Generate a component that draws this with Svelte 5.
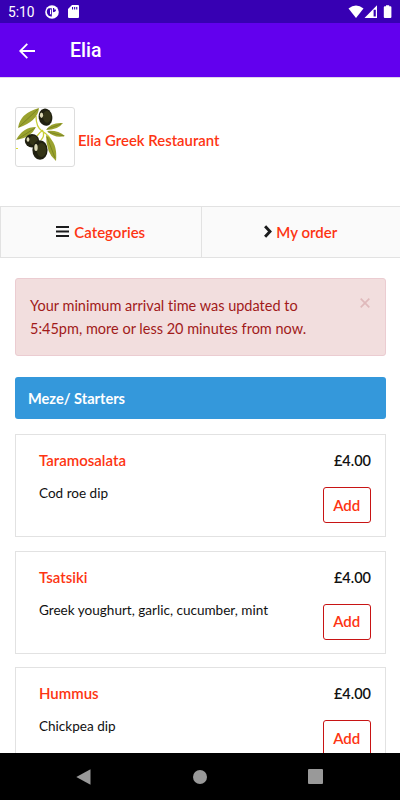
<script>
  const restaurant = 'Elia Greek Restaurant'
  const section = 'Meze/ Starters'

  const items = [
    { id: 1, name: 'Taramosalata', description: 'Cod roe dip', price: 4 },
    { id: 2, name: 'Tsatsiki', description: 'Greek youghurt, garlic, cucumber, mint', price: 4 },
    { id: 3, name: 'Hummus', description: 'Chickpea dip', price: 4 }
  ]

  let showAlert = $state(true)

  function formatPrice(value) {
    return '£' + value.toFixed(2)
  }
</script>

<div class="screen">
  <div class="status-bar">
    <span class="time">5:10</span>
    <svg class="app-icon" width="14" height="14" viewBox="0 0 14 14">
      <circle cx="7" cy="7" r="6.8" fill="#fff" />
      <path d="M3.6 3.2H6.8V11.4A4.6 4.6 0 0 1 3.6 3.2Z" fill="#3700b3" />
      <path d="M5 4.5h1v4.8H5z" fill="#fff" />
      <path d="M8 3h1.2v1.6h1.7v1.2q-.5 1.4-2.9 1.5z" fill="#3700b3" />
    </svg>
    <svg class="sd-icon" width="11" height="13" viewBox="0 0 11 13">
      <path d="M4 0h6a1 1 0 0 1 1 1v11a1 1 0 0 1-1 1H1a1 1 0 0 1-1-1V4z" fill="#fff" />
      <path d="M4 2h1.1v2.4H4zM6.1 2h1.1v2.4H6.1zM8.2 2h1.1v2.4H8.2z" fill="#3700b3" />
    </svg>
    <span class="spacer"></span>
    <svg width="45" height="14" viewBox="0 0 45 14" fill="#fff">
      <path d="M0.5 3.5Q8 -2.5 15.5 3.5L8 13z" />
      <path d="M29 0.3V13H16.5zM27.8 4.8H25.6V11.5h2.2z" fill-rule="evenodd" />
      <path d="M38 1.3V0.3h3.2v1h1.2q1 0 1 1v9.7q0 1-1 1h-5.6q-1 0-1-1V2.3q0-1 1-1z" />
    </svg>
  </div>

  <header class="app-bar">
    <button class="back" aria-label="Back">
      <svg width="16" height="16" viewBox="0 0 16 16" fill="none" stroke="#fff" stroke-width="1.8">
        <path d="M16 8H1.5M8.3 0.9L1.2 8l7.1 7.1" />
      </svg>
    </button>
    <h1>Elia</h1>
  </header>

  <main>
    <div class="restaurant">
      <svg class="logo" viewBox="1 1 58 58">
        <g fill="none" stroke="#c9cf35" stroke-width="1.3">
          <path d="M21 9Q21 20 27 24Q35 29 36 34M28 23Q25 25 22 29M28 24Q30 29 26 33" />
        </g>
        <path d="M3 21Q5 6 24 1Q23 14 3 21Z" fill="#9aa22e" />
        <path d="M1 33Q8 20 21 20Q16 31 1 33Z" fill="#9aa22e" />
        <path d="M31 23Q36 15 48 16Q43 23 31 23Z" fill="#9aa22e" />
        <path d="M32 24Q43 23 50 29Q40 32 32 24Z" fill="#9aa22e" />
        <path d="M31 28Q43 35 41 54Q31 46 31 28Z" fill="#9aa22e" />
        <g fill="none" stroke="#6f7820" stroke-width="0.7">
          <path d="M4 20L23 2M3 32L20 21M32 22L46 17M33 25L49 29M32 30L40 51" />
        </g>
        <ellipse cx="30.5" cy="10.2" rx="6.8" ry="8.7" transform="rotate(-10 30.5 10.2)" fill="#202010" />
        <ellipse cx="32" cy="9.7" rx="4" ry="6" fill="#343416" />
        <ellipse cx="26.5" cy="8.2" rx="1.6" ry="2.8" fill="#ddd9b5" />
        <ellipse cx="17" cy="33.8" rx="7.2" ry="6.8" fill="#202010" />
        <ellipse cx="18.5" cy="33.5" rx="4.2" ry="4.7" fill="#343416" />
        <ellipse cx="13" cy="32.5" rx="1.4" ry="2.2" fill="#ddd9b5" />
        <ellipse cx="25" cy="43" rx="7.6" ry="9.8" fill="#202010" />
        <ellipse cx="26.5" cy="43" rx="4.7" ry="7" fill="#343416" />
        <ellipse cx="21" cy="40.5" rx="1.7" ry="3.6" fill="#ddd9b5" />
        <path d="M1 41h2v1H1z" fill="#d8dc25" />
        <path d="M0 25h1v2H0z" fill="#777" />
      </svg>
      <a class="restaurant-name" href="#home">{restaurant}</a>
    </div>

    <nav class="tabs">
      <a class="tab" href="#categories">
        <svg class="bars" width="13" height="11" viewBox="0 0 13 11" fill="#1b1c1d">
          <path d="M0 0h13v2H0zM0 4.5h13v2H0zM0 9h13v2H0z" />
        </svg>
        Categories
      </a>
      <a class="tab" href="#order">
        <svg class="chevron" width="8" height="13" viewBox="0 0 8 13" fill="none" stroke="#1b1c1d" stroke-width="2.9">
          <path d="M1.1 1.2L6 6.5L1.1 11.8" />
        </svg>
        My order
      </a>
    </nav>

    {#if showAlert}
      <div class="alert">
        <p>Your minimum arrival time was updated to 5:45pm, more or less 20 minutes from now.</p>
        <button class="close" aria-label="Close" onclick={() => (showAlert = false)}>
          <svg width="10" height="10" viewBox="0 0 10 10" fill="none" stroke="#dfb9bb" stroke-width="1.7">
            <path d="M0.7 0.7l8.6 8.6M9.3 0.7L0.7 9.3" />
          </svg>
        </button>
      </div>
    {/if}

    <h2>{section}</h2>

    <div class="items">
      {#each items as item (item.id)}
        <div class="card">
          <div class="info">
            <a class="name" href="#item">{item.name}</a>
            <p>{item.description}</p>
          </div>
          <div class="side">
            <span class="price">{formatPrice(item.price)}</span>
            <button class="add">Add</button>
          </div>
        </div>
      {/each}
    </div>
  </main>

  <div class="nav-bar">
    <svg width="15" height="16" viewBox="0 0 15 16"><path d="M14.5 0.3v15.4L0.3 8z" fill="#999" /></svg>
    <svg width="14" height="14" viewBox="0 0 14 14"><circle cx="7" cy="7" r="7" fill="#999" /></svg>
    <svg width="15" height="15" viewBox="0 0 15 15"><rect width="15" height="15" rx="1" fill="#999" /></svg>
  </div>
</div>

<style>
  :global(body) {
    margin: 0;
    background: #fff;
  }

  .screen {
    width: 400px;
    height: 800px;
    display: flex;
    flex-direction: column;
    overflow: hidden;
    background: #fff;
    color: #111;
    font-family: Lato, 'Liberation Sans', sans-serif;
    font-size: 15px;
    font-variant-ligatures: none;
  }
  button {
    font: inherit;
    padding: 0;
    border: 0;
    background: none;
  }
  a {
    color: #fd3412;
    font-weight: 600;
    text-decoration: none;
  }
  p {
    margin: 0;
  }
  svg {
    display: block;
    flex: none;
  }

  .status-bar {
    flex: 0 0 23px;
    display: flex;
    align-items: center;
    padding: 0 7px 0 8px;
    background: #3700b3;
    color: #fff;
    font-family: Roboto, sans-serif;
    font-size: 13.8px;
  }
  .time {
    width: 37px;
    line-height: 22px;
    padding-top: 1px;
  }
  .sd-icon {
    margin-left: 9px;
  }
  .spacer {
    flex: 1;
  }

  .app-bar {
    flex: 0 0 54px;
    display: flex;
    align-items: center;
    padding: 1px 0 0 19px;
    background: #6200ee;
    color: #fff;
    border-bottom: 1px solid #ddd5ea;
  }
  .back {
    width: 51px;
  }
  h1 {
    margin: 0;
    font-family: Roboto, sans-serif;
    font-size: 19.5px;
    font-weight: 500;
  }

  main {
    flex: 1;
    min-height: 0;
    overflow: hidden;
  }
  .restaurant {
    height: 99px;
    display: flex;
    gap: 3px;
    padding: 29px 15px 0;
  }
  .app-bar,
  .restaurant,
  .tabs {
    box-sizing: border-box;
  }
  .app-bar {
    flex-basis: 55px;
  }
  .restaurant {
    height: 128px;
  }
  .logo {
    box-sizing: border-box;
    width: 60px;
    height: 60px;
    border: 1px solid #ddd;
    border-radius: 3px;
  }
  .restaurant-name {
    font-size: 14.9px;
    line-height: 66px;
  }

  .tabs {
    display: grid;
    grid-template-columns: 1fr 1fr;
    height: 52px;
    border: 1px solid #e2e2e2;
    border-right: 0;
    background: #fafafa;
  }
  .tab {
    display: flex;
    align-items: center;
    justify-content: center;
    padding-bottom: 1px;
  }
  .tab + .tab {
    border-left: 1px solid #e2e2e2;
  }
  .bars {
    margin-right: 5px;
  }
  .chevron {
    margin-right: 4px;
  }

  .alert {
    box-sizing: border-box;
    height: 78px;
    margin: 20px 14px 0 15px;
    padding: 15px 15px 15px 14px;
    display: flex;
    align-items: flex-start;
    justify-content: space-between;
    background: #f2dede;
    border: 1px solid #ebccd1;
    border-radius: 3px;
    color: #a11a1a;
    font-size: 14.5px;
    line-height: 23px;
  }
  .alert p {
    width: 285px;
  }
  .close {
    margin-top: 4px;
  }

  h2 {
    box-sizing: border-box;
    height: 42px;
    margin: 21px 14px 0 15px;
    padding-left: 13px;
    background: #3498db;
    border-radius: 3px;
    color: #fff;
    font-size: 14.6px;
    font-weight: 700;
    line-height: 43px;
  }

  .items {
    display: flex;
    flex-direction: column;
    gap: 13.5px;
    padding: 15px 14px 0 15px;
  }
  .card {
    box-sizing: border-box;
    flex: none;
    height: 103px;
    display: flex;
    justify-content: space-between;
    padding: 15px 14px 0 23px;
    border: 1px solid #e2e2e2;
  }
  .info p {
    margin-top: 12px;
    font-size: 13.55px;
    line-height: 21px;
  }
  .name,
  .price {
    display: block;
    line-height: 21px;
  }
  .side {
    display: flex;
    flex-direction: column;
    align-items: flex-end;
  }
  .price {
    font-size: 14.5px;
    font-weight: 600;
  }
  .add {
    box-sizing: border-box;
    width: 48.5px;
    height: 36px;
    margin-top: 16px;
    padding-bottom: 1px;
    border: 1px solid #c81414;
    border-radius: 3px;
    color: #fd3412;
    font-weight: 600;
  }

  .nav-bar {
    flex: 0 0 47px;
    box-sizing: border-box;
    display: flex;
    align-items: center;
    justify-content: space-between;
    padding: 0 77px 0 76px;
    background: #000;
  }
</style>
